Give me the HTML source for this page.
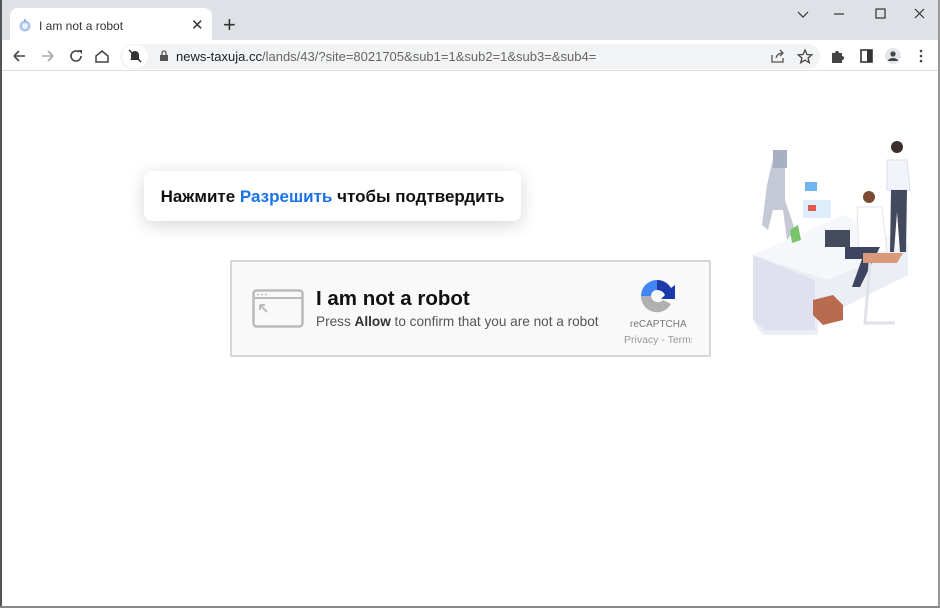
<!DOCTYPE html>
<html><head><meta charset="utf-8"><style>
*{margin:0;padding:0;box-sizing:border-box}
body{width:940px;height:608px;overflow:hidden;background:#fff;font-family:"Liberation Sans",Arial,sans-serif;position:relative}
.abs{position:absolute}
</style></head><body>
<div class="abs" style="left:0;top:0;width:940px;height:40px;background:#dee1e6"></div>
<div class="abs" style="left:0;top:0;width:2px;height:608px;background:#555"></div>
<div class="abs" style="left:938px;top:0;width:2px;height:608px;background:#999"></div>
<div class="abs" style="left:0;top:606px;width:940px;height:2px;background:#888"></div>
<div class="abs" style="left:10px;top:8px;width:202px;height:34px;background:#fff;border-radius:8px 8px 0 0"></div>
<svg class="abs" style="left:17px;top:17px" width="16" height="16" viewBox="0 0 16 16"><circle cx="8" cy="9" r="5.5" fill="#a8c4ef"/><circle cx="8" cy="9" r="3" fill="#e8f0fc"/><path d="M8 2v3" stroke="#7aa3e6" stroke-width="1.5"/></svg>
<div class="abs" style="left:39px;top:19px;font-size:12px;color:#333">I am not a robot</div>
<div class="abs" style="left:191px;top:16px;font-size:15px;color:#333">✕</div>
<div class="abs" style="left:223px;top:12px;font-size:22px;color:#333;font-weight:300">+</div>
<svg class="abs" style="left:796px;top:8px" width="130" height="14" viewBox="0 0 130 14"><path d="M2 4l5 5 5-5" fill="none" stroke="#333" stroke-width="1.2"/><path d="M38 6h10" stroke="#333" stroke-width="1.2"/><rect x="80" y="1" width="9" height="9" fill="none" stroke="#333" stroke-width="1.2"/><path d="M119 1l9 9M128 1l-9 9" stroke="#333" stroke-width="1.2"/></svg>
<div class="abs" style="left:2px;top:40px;width:936px;height:31px;background:#fff;border-bottom:1px solid #ddd"></div>
<svg class="abs" style="left:12px;top:48px" width="100" height="16" viewBox="0 0 100 16"><path d="M2 8h11M2 8l5-5M2 8l5 5" fill="none" stroke="#444" stroke-width="1.6"/><path d="M30 8h11M41 8l-5-5M41 8l-5 5" fill="none" stroke="#aaa" stroke-width="1.6"/><path d="M67 4a5 5 0 1 0 2 4" fill="none" stroke="#444" stroke-width="1.6"/><path d="M66 2h4v4" fill="#444"/><path d="M84 8l6-5 6 5v6h-12z" fill="none" stroke="#444" stroke-width="1.5"/></svg>
<div class="abs" style="left:120px;top:44px;width:700px;height:25px;background:#f1f3f4;border-radius:13px"></div>
<div class="abs" style="left:122px;top:45px;width:26px;height:23px;background:#fff;border-radius:12px"></div>
<svg class="abs" style="left:128px;top:49px" width="14" height="14" viewBox="0 0 14 14"><path d="M3 10V6a4 4 0 0 1 8 0v4l1 1H2z" fill="#333"/><path d="M1 1l12 12" stroke="#333" stroke-width="1.5"/></svg>
<svg class="abs" style="left:159px;top:50px" width="10" height="12" viewBox="0 0 10 12"><rect x="1" y="5" width="8" height="6" fill="#555"/><path d="M3 5V3a2 2 0 0 1 4 0v2" fill="none" stroke="#555" stroke-width="1.3"/></svg>
<div class="abs" style="left:176px;top:49px;font-size:13px;color:#202124">news-taxuja.cc<span style="color:#666">/lands/43/?site=8021705&amp;sub1=1&amp;sub2=1&amp;sub3=&amp;sub4=</span></div>
<svg class="abs" style="left:770px;top:48px" width="160" height="16" viewBox="0 0 160 16"><path d="M2 7v7h11v-4M6 10c1-4 4-5 7-5M10 2l3 3-3 3" fill="none" stroke="#555" stroke-width="1.3"/><path d="M35 2l2 4.5 4.8.4-3.7 3.1 1.2 4.7-4.3-2.6-4.3 2.6 1.2-4.7-3.7-3.1 4.8-.4z" fill="none" stroke="#444" stroke-width="1.3"/><path d="M62 5h3a2 2 0 0 1 4 0h3v3a2 2 0 0 1 0 4v3h-10z" fill="#444"/><rect x="91" y="2" width="11" height="12" fill="none" stroke="#333" stroke-width="1.6"/><rect x="97" y="2" width="5" height="12" fill="#333"/><circle cx="123" cy="8" r="8" fill="#e3e6ea"/><circle cx="123" cy="6" r="2.6" fill="#444"/><path d="M118 13a5 3 0 0 1 10 0z" fill="#444"/><circle cx="151" cy="3" r="1.3" fill="#444"/><circle cx="151" cy="8" r="1.3" fill="#444"/><circle cx="151" cy="13" r="1.3" fill="#444"/></svg>
<div class="abs" style="left:144px;top:171px;width:377px;height:50px;background:#fff;border-radius:8px;box-shadow:0 4px 18px rgba(0,0,0,0.16);font-size:17px;font-weight:bold;color:#111;text-align:center;line-height:52px">Нажмите <span style="color:#1a73e8">Разрешить</span> чтобы подтвердить</div>
<div class="abs" style="left:230px;top:260px;width:481px;height:97px;background:#f9f9f9;border:2px solid #d6d6d6;border-radius:2px"></div>
<svg class="abs" style="left:252px;top:289px" width="52" height="39" viewBox="0 0 52 39"><rect x="1.5" y="1.5" width="49" height="36" rx="3" fill="none" stroke="#bbb" stroke-width="2.5"/><path d="M2 9h48" stroke="#bbb" stroke-width="2"/><circle cx="6" cy="5.5" r="1" fill="#bbb"/><circle cx="10" cy="5.5" r="1" fill="#bbb"/><circle cx="14" cy="5.5" r="1" fill="#bbb"/><path d="M8 16h5M8 16v5M8 16l7 7" stroke="#bbb" stroke-width="2"/></svg>
<div class="abs" style="left:316px;top:287px;font-size:20.5px;font-weight:bold;color:#111">I am not a robot</div>
<div class="abs" style="left:316px;top:314px;font-size:13.6px;color:#555">Press <b style="color:#333">Allow</b> to confirm that you are not a robot</div>
<svg class="abs" style="left:638px;top:277px" width="38" height="38" viewBox="0 0 38 38"><path d="M19 3a16 16 0 0 0-16 16h10a6 6 0 0 1 6-6z" fill="#4285f4"/><path d="M19 3a16 16 0 0 1 14 8l4-3v14h-14l4-4a9 9 0 0 0-8-5z" fill="#1c3aa9"/><path d="M3 19a16 16 0 0 0 30 8l-8-4a7 7 0 0 1-12-4z" fill="#b0b0b0"/></svg>
<div class="abs" style="left:630px;top:319px;font-size:10px;color:#777">reCAPTCHA</div>
<div class="abs" style="left:624px;top:334px;width:68px;overflow:hidden;white-space:nowrap;font-size:10.5px;color:#999">Privacy - Terms</div>
<svg class="abs" style="left:745px;top:135px" width="175" height="205" viewBox="0 0 175 205">
<path d="M8 120l90-40 65 30v30l-70 35-20-5v30l-55 0-8-10z" fill="#eceef6"/>
<path d="M8 120l90-40 65 30-80 35z" fill="#f6f7fb"/>
<path d="M8 120v65l12 10h50v-50z" fill="#dfe2ee"/>
<path d="M30 15l10 0 0 50 10 30-8 10-4-30-10 0-5 20-6-5 5-40z" fill="#c5c9d6"/>
<rect x="28" y="15" width="14" height="18" fill="#aab0c4"/>
<rect x="80" y="95" width="25" height="17" fill="#444b5c"/>
<rect x="60" y="47" width="12" height="9" fill="#6fb6f0"/>
<rect x="58" y="65" width="28" height="18" fill="#cfe6fa" opacity=".7"/>
<rect x="63" y="70" width="8" height="6" fill="#e05a4e"/>
<path d="M45 95l8-5 3 15-9 3z" fill="#79c46a"/>
<circle cx="124" cy="62" r="6" fill="#7a4a32"/>
<path d="M112 72h25l5 45h-28z" fill="#fff" stroke="#e2e4ea"/>
<path d="M100 112h35l-20 40h-8l10-28h-17z" fill="#3d4560"/>
<path d="M118 118h40l-6 10h-34z" fill="#d89a7a"/>
<path d="M125 128l-5 60h30" fill="none" stroke="#e0e2ea" stroke-width="3"/>
<circle cx="152" cy="12" r="6" fill="#3b2e2e"/>
<path d="M142 25h20l3 30h-23z" fill="#f1f4fa" stroke="#dde"/>
<path d="M146 55h16l-1 62h-6l-3-40-3 40h-4z" fill="#444a5e"/>
<path d="M68 165l20-5 10 10v15l-20 5-10-10z" fill="#b86b4e"/>
</svg>
</body></html>
